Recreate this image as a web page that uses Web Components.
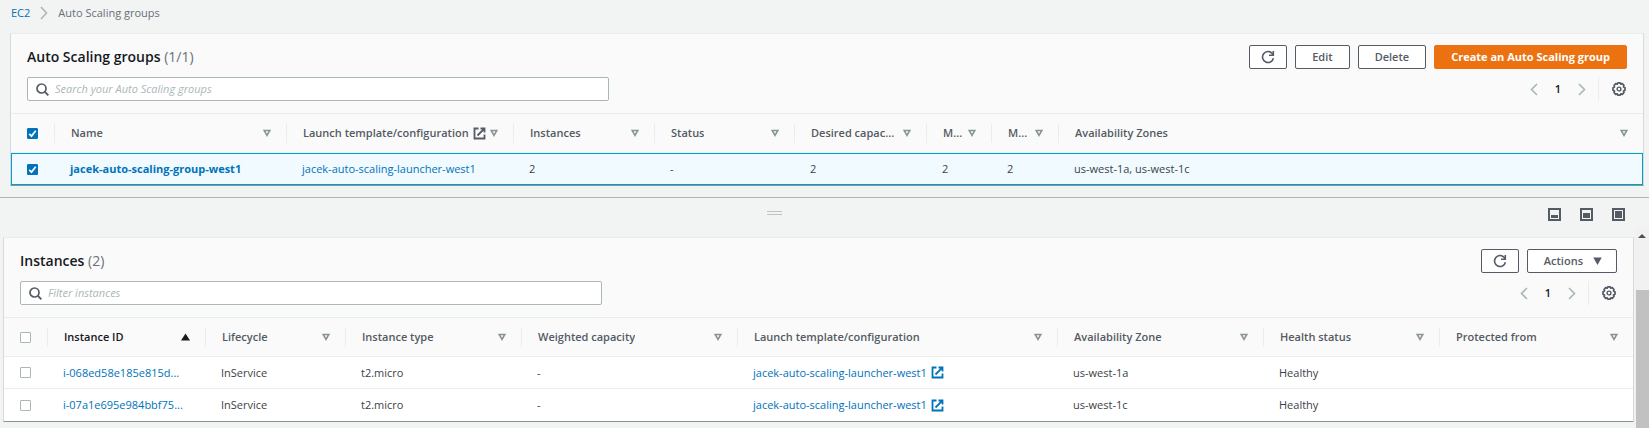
<!DOCTYPE html>
<html lang="en">
<head>
<meta charset="utf-8">
<title>Auto Scaling groups</title>
<style>
  body { margin: 0; background: #f2f3f3; color: #3c4149; font: 11px/16px "Open Sans", "Noto Sans", sans-serif; }
</style>
</head>
<body>
<console-app></console-app>

<template id="console-app">
  <style>
    :host { display: flex; flex-direction: column; min-height: 100vh; }
    .groups { margin: 0 5px 11px 10px; }
    .pane { flex: 1; display: flex; }
    .content { flex: 1; min-width: 0; padding: 9px 0 5px 3px; }
  </style>
  <bread-crumbs></bread-crumbs>
  <data-panel class="groups" heading="Auto Scaling groups" count="(1/1)" placeholder="Search your Auto Scaling groups">
    <ui-button slot="actions" icon="refresh" label="Refresh"></ui-button>
    <ui-button slot="actions">Edit</ui-button>
    <ui-button slot="actions">Delete</ui-button>
    <ui-button slot="actions" variant="primary">Create an Auto Scaling group</ui-button>
    <groups-table></groups-table>
  </data-panel>
  <split-bar></split-bar>
  <div class="pane">
    <div class="content">
      <data-panel heading="Instances" count="(2)" placeholder="Filter instances">
        <ui-button slot="actions" icon="refresh" label="Refresh"></ui-button>
        <ui-button slot="actions" caret>Actions</ui-button>
        <instances-table></instances-table>
      </data-panel>
    </div>
    <scroll-rail></scroll-rail>
  </div>
</template>

<template id="bread-crumbs">
  <style>
    :host { display: block; }
    nav { display: flex; align-items: center; gap: 10px; height: 25px; padding: 0 11px 8px; color: #687078; }
    a { color: #0073bb; text-decoration: none; }
    ui-icon { color: #aab7b8; }
  </style>
  <nav aria-label="Breadcrumbs"><a href="#ec2">EC2</a><ui-icon name="crumb"></ui-icon><span>Auto Scaling groups</span></nav>
</template>

<template id="data-panel">
  <style>
    :host { display: block; background: #fafafa; border: 1px solid #d5dbdb; border-top-color: #eaeded; border-bottom-color: #879596; }
    header { display: grid; gap: 8px; padding: 11px 16px 12px; border-bottom: 1px solid #eaeded; }
    .row { display: flex; justify-content: space-between; align-items: center; gap: 16px; height: 24px; }
    h2 { margin: 0; font-size: 14px; line-height: 24px; font-weight: 600; color: #16191f; }
    .count { font-weight: 400; color: #687078; }
    .actions { display: flex; gap: 8px; }
    .search { flex: 0 1 582px; box-sizing: border-box; height: 24px; display: flex; align-items: center; gap: 6px; padding: 0 8px; background: #fff; border: 1px solid #aab7b8; border-radius: 2px; color: #545b64; }
    input { flex: 1; min-width: 0; padding: 0; border: 0; outline: 0; background: none; font: inherit; color: #16191f; }
    input::placeholder { color: #aab7b8; font-style: italic; opacity: 1; }
  </style>
  <header>
    <div class="row">
      <h2><span class="title"></span> <span class="count"></span></h2>
      <div class="actions"><slot name="actions"></slot></div>
    </div>
    <div class="row">
      <label class="search"><ui-icon name="search"></ui-icon><input type="text"></label>
      <page-nav></page-nav>
    </div>
  </header>
  <slot></slot>
</template>

<template id="page-nav">
  <style>
    :host { display: flex; align-items: center; height: 24px; color: #16191f; }
    button { display: flex; align-items: center; justify-content: center; width: 24px; height: 24px; padding: 0; border: 0; background: none; font: inherit; color: inherit; }
    .arrow { color: #aab7b8; }
    .current { font-weight: 600; }
    .prefs { width: 29px; margin-left: 4px; padding-left: 12px; border-left: 1px solid #eaeded; color: #545b64; }
  </style>
  <button class="arrow" aria-label="Previous page"><ui-icon name="prev"></ui-icon></button>
  <button class="current">1</button>
  <button class="arrow" aria-label="Next page"><ui-icon name="next"></ui-icon></button>
  <button class="prefs" aria-label="Preferences"><ui-icon name="gear"></ui-icon></button>
</template>

<template id="split-bar">
  <style>
    :host { display: grid; grid-template-columns: 1fr auto 1fr auto; height: 30px; border-top: 1px solid #aab7b8; }
    .grip { grid-column: 2; width: 15px; height: 2px; margin-top: 13px; border: solid #bcc5c5; border-width: 1px 0; }
    .sizes { grid-column: 4; display: flex; align-items: flex-start; gap: 19px; padding: 10px 24px 0 0; }
    button { display: flex; padding: 0; border: 0; background: none; color: #545b64; }
  </style>
  <div class="grip"></div>
  <div class="sizes">
    <button aria-label="Small panel"><ui-icon name="pane-s"></ui-icon></button>
    <button aria-label="Medium panel"><ui-icon name="pane-m"></ui-icon></button>
    <button aria-label="Full panel"><ui-icon name="pane-l"></ui-icon></button>
  </div>
</template>

<template id="scroll-rail">
  <style>
    :host { display: flex; flex-direction: column; width: 15px; background: #f1f1f1; color: #505050; }
    ui-icon { height: 16px; margin: 0 auto; }
    .thumb { flex: 1; margin: 46px 0 0 2px; background: #c1c1c1; }
  </style>
  <ui-icon name="scroll-up"></ui-icon>
  <div class="thumb"></div>
</template>

<script>
const ICONS = {
  crumb: [8, 14, '<path d="M1 1l5.500 6L1 13" fill="none" stroke="currentColor" stroke-width="1.600"/>'],
  prev: [8, 13, '<path d="M7 1L1.500 6.500 7 12" fill="none" stroke="currentColor" stroke-width="1.600"/>'],
  next: [8, 13, '<path d="M1 1l5.500 5.500L1 12" fill="none" stroke="currentColor" stroke-width="1.600"/>'],
  search: [13, 13, '<circle cx="5.500" cy="5.500" r="4.500" fill="none" stroke="currentColor" stroke-width="1.700"/><path d="M8.700 8.700L12.300 12.300" stroke="currentColor" stroke-width="1.900"/>'],
  refresh: [14, 14, '<path d="M12.400 8.200A5.500 5.500 0 1 1 11.200 3.400L12 4.600" fill="none" stroke="currentColor" stroke-width="1.600"/><path d="M12.300 1v4.200H8" fill="none" stroke="currentColor" stroke-width="1.600"/>'],
  gear: [16, 16, '<path d="M6.800 1.900h2.400l.6 1.300 1.500-.6 1.700 1.900-.5 1.400 1.500.8v2.600l-1.500.8.5 1.400-1.700 1.900-1.500-.6-.6 1.300H6.800l-.6-1.300-1.500.6L3 11.500l.5-1.400L2 9.300V6.700l1.500-.8L3 4.500l1.700-1.900 1.500.6z" fill="none" stroke="currentColor" stroke-width="1.700" stroke-linejoin="round"/><circle cx="8" cy="8" r="1.900" fill="none" stroke="currentColor" stroke-width="1.400"/>'],
  sort: [8, 8, '<path d="M1.200 1.500h5.600L4 6.300z" fill="none" stroke="currentColor" stroke-width="1.600"/>'],
  'sort-up': [9, 8, '<path d="M0 7.500h9L4.500.5z" fill="currentColor"/>'],
  caret: [9, 8, '<path d="M.3.500h8.400L4.500 8z" fill="currentColor"/>'],
  external: [13, 13, '<path d="M5.500 1.500h-4v10h10v-4" fill="none" stroke="currentColor" stroke-width="1.800"/><path d="M7.500 1.500h4v4M11.300 1.700L4.500 8.500" fill="none" stroke="currentColor" stroke-width="1.800"/>'],
  'pane-s': [13, 13, '<path d="M1 1h11v11H1z" fill="none" stroke="currentColor" stroke-width="2"/><path d="M3 7h7v3H3z" fill="currentColor"/>'],
  'pane-m': [13, 13, '<path d="M1 1h11v11H1z" fill="none" stroke="currentColor" stroke-width="2"/><path d="M3 5h7v5H3z" fill="currentColor"/>'],
  'pane-l': [13, 13, '<path d="M1 1h11v11H1z" fill="none" stroke="currentColor" stroke-width="2"/><path d="M3 3h7v7H3z" fill="currentColor"/>'],
  'scroll-up': [8, 16, '<path d="M0 10h8L4 6z" fill="currentColor"/>']
};

class TemplateElement extends HTMLElement {
  constructor() {
    super();
    const t = document.getElementById(this.localName);
    this.attachShadow({ mode: 'open' }).append(t.content.cloneNode(true));
  }
}

customElements.define('ui-icon', class extends HTMLElement {
  connectedCallback() {
    if (this.shadowRoot) return;
    const [w, h, body] = ICONS[this.getAttribute('name')];
    this.attachShadow({ mode: 'open' }).innerHTML =
      `<style>:host{display:inline-flex;flex:none}svg{display:block}</style>
       <svg width="${w}" height="${h}" viewBox="0 0 ${w} ${h}" aria-hidden="true">${body}</svg>`;
  }
});

customElements.define('ui-button', class extends HTMLElement {
  connectedCallback() {
    if (this.shadowRoot) return;
    const icon = this.getAttribute('icon');
    const label = this.getAttribute('label');
    this.attachShadow({ mode: 'open' }).innerHTML = `
      <style>
        :host { display: block; }
        button { display: flex; align-items: center; justify-content: center; gap: 10px; box-sizing: border-box; height: 24px; padding: 0 16px; border: 1px solid #545b64; border-radius: 2px; background: #fff; color: #545b64; font: inherit; font-weight: 600; white-space: nowrap; }
        button.icon { padding: 0 11px; }
        button.caret { padding-right: 14px; }
        :host([variant=primary]) button { border-color: #ec7211; background: #ec7211; color: #fff; font-weight: 700; }
      </style>
      <button class="${icon ? 'icon' : this.hasAttribute('caret') ? 'caret' : ''}" ${label ? `aria-label="${label}"` : ''}>
        ${icon ? `<ui-icon name="${icon}"></ui-icon>` : '<slot></slot>'}
        ${this.hasAttribute('caret') ? '<ui-icon name="caret"></ui-icon>' : ''}
      </button>`;
  }
});

const TABLE_CSS = `
  :host { display: block; }
  table { width: 100%; table-layout: fixed; border-collapse: separate; border-spacing: 0; }
  th, td { padding: 0; text-align: left; white-space: nowrap; }
  th { height: 38px; border-bottom: 1px solid #eaeded; font-weight: 600; color: #545b64; }
  th > div { display: flex; align-items: center; gap: 4px; box-sizing: border-box; height: 19px; padding: 0 15px 0 16px; border-right: 1px solid #eaeded; }
  th:last-child > div { border-right: 0; }
  th.sorted, th.sorted .sort { color: #16191f; }
  .title { overflow: hidden; text-overflow: clip; }
  .sort { display: flex; margin-left: auto; padding: 0; border: 0; background: none; color: #879596; }
  td { box-sizing: border-box; height: 32px; padding: 0 15px; border-bottom: 1px solid #eaeded; background: #fff; }
  tbody tr:last-child td { border-bottom: 0; }
  td > div { display: flex; align-items: center; gap: 4px; }
  td a { color: #0073bb; text-decoration: none; }
  td ui-icon { color: #0073bb; }
  td strong { font-weight: 700; }
  .pick { padding-left: 16px; }
  input { appearance: none; box-sizing: border-box; display: block; width: 11px; height: 11px; margin: 0; border: 1px solid #aab7b8; border-radius: 1px; background: #fff; }
  input:checked { border-color: #0073bb; background: #0073bb url("data:image/svg+xml,%3Csvg xmlns='http://www.w3.org/2000/svg' viewBox='0 0 9 9'%3E%3Cpath d='M1.200 4.800l2.300 2.300 4.200-5.400' fill='none' stroke='white' stroke-width='1.700'/%3E%3C/svg%3E") center / 9px 9px no-repeat; }
  tr.selected { outline: 1px solid #00a1c9; outline-offset: -1px; }
  tr.selected td { background: #f1faff; }
`;

class DataTable extends HTMLElement {
  connectedCallback() {
    if (this.shadowRoot) return;
    const head = this.columns.map(c => `
      <th scope="col" ${c.sorted ? 'class="sorted" aria-sort="ascending"' : ''}><div>
        <span class="title">${c.title}</span>${c.external ? '<ui-icon name="external"></ui-icon>' : ''}
        <button class="sort" aria-label="Sort by ${c.title}"><ui-icon name="${c.sorted ? 'sort-up' : 'sort'}"></ui-icon></button>
      </div></th>`).join('');
    const checked = this.selected ? 'checked' : '';
    const rows = this.rows.map(r => `
      <tr ${this.selected ? 'class="selected"' : ''}>
        <td class="pick"><input type="checkbox" aria-label="Select row" ${checked}></td>
        ${r.map(v => `<td><div>${v}</div></td>`).join('')}
      </tr>`).join('');
    this.attachShadow({ mode: 'open' }).innerHTML = `<style>${TABLE_CSS}</style>
      <table>
        <colgroup><col style="width:44px">${this.columns.map(c => c.width ? `<col style="width:${c.width}px">` : '<col>').join('')}</colgroup>
        <thead><tr><th scope="col"><div class="pick"><input type="checkbox" aria-label="Select all" ${checked}></div></th>${head}</tr></thead>
        <tbody>${rows}</tbody>
      </table>`;
  }
}

customElements.define('groups-table', class extends DataTable {
  selected = true;
  columns = [
    { title: 'Name', width: 232 },
    { title: 'Launch template/configuration', width: 227, external: true },
    { title: 'Instances', width: 141 },
    { title: 'Status', width: 140 },
    { title: 'Desired capac...', width: 132 },
    { title: 'M...', width: 65 },
    { title: 'M...', width: 67 },
    { title: 'Availability Zones' }
  ];
  rows = [[
    '<a href="#group"><strong>jacek-auto-scaling-group-west1</strong></a>',
    '<a href="#launcher">jacek-auto-scaling-launcher-west1</a>',
    '2', '-', '2', '2', '2', 'us-west-1a, us-west-1c'
  ]];
});

const launcher = '<a href="#launcher">jacek-auto-scaling-launcher-west1</a><ui-icon name="external"></ui-icon>';
customElements.define('instances-table', class extends DataTable {
  selected = false;
  columns = [
    { title: 'Instance ID', width: 158, sorted: true },
    { title: 'Lifecycle', width: 140 },
    { title: 'Instance type', width: 176 },
    { title: 'Weighted capacity', width: 216 },
    { title: 'Launch template/configuration', width: 320 },
    { title: 'Availability Zone', width: 206 },
    { title: 'Health status', width: 176 },
    { title: 'Protected from' }
  ];
  rows = [
    ['<a href="#i-068ed58e185e815d">i-068ed58e185e815d...</a>', 'InService', 't2.micro', '-', launcher, 'us-west-1a', 'Healthy', ''],
    ['<a href="#i-07a1e695e984bbf75">i-07a1e695e984bbf75...</a>', 'InService', 't2.micro', '-', launcher, 'us-west-1c', 'Healthy', '']
  ];
});

customElements.define('data-panel', class extends TemplateElement {
  connectedCallback() {
    const $ = s => this.shadowRoot.querySelector(s);
    $('.title').textContent = this.getAttribute('heading');
    $('.count').textContent = this.getAttribute('count');
    $('input').placeholder = this.getAttribute('placeholder');
    $('input').setAttribute('aria-label', this.getAttribute('placeholder'));
  }
});

for (const name of ['bread-crumbs', 'page-nav', 'split-bar', 'scroll-rail', 'console-app'])
  customElements.define(name, class extends TemplateElement {});
</script>
</body>
</html>
